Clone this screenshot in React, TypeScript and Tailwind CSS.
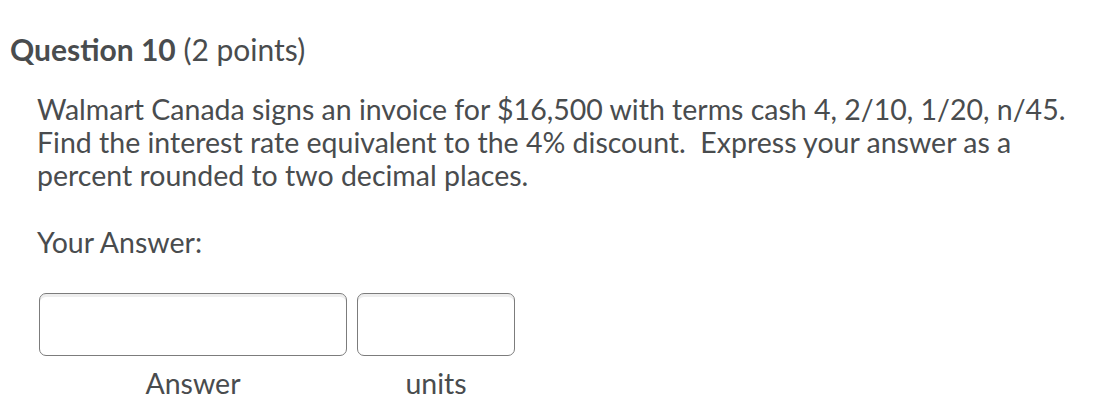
import React from "react";

export default function App() {
    return (
        <div className="w-[1110px] h-[405px] bg-white text-[#494c4e] overflow-hidden" style={{ fontFamily: "Lato, sans-serif" }}>
            {/* Heading */}
            <h2 className="pl-[10px] pt-[32px] text-[30px] leading-[34px]">
                <span className="font-bold">Question 10</span> (2 points)
            </h2>

            <div className="pl-[37px] pt-[27px]">
                <p className="text-[28.5px] leading-[33px] whitespace-nowrap">
                    Walmart Canada signs an invoice for $16,500 with terms cash 4, 2/10, 1/20, n/45.
                    <br />
                    Find the interest rate equivalent to the 4% discount.&nbsp; Express your answer as a
                    <br />
                    percent rounded to two decimal places.
                </p>

                <p className="mt-[34px] text-[28.5px] leading-[33px]">Your Answer:</p>

                {/* Answer fields */}
                <div className="mt-[34px] pl-[2px] flex gap-[10px]">
                    <div className="flex flex-col items-center">
                        <div className="w-[308px] h-[63px] rounded-[7px] border border-[#7c7c7c] shadow-[inset_0_3px_0_#eeeeee]" />
                        <span className="mt-[11px] text-[28.5px] leading-[33px]">Answer</span>
                    </div>
                    <div className="flex flex-col items-center">
                        <div className="w-[158px] h-[63px] rounded-[7px] border border-[#7c7c7c] shadow-[inset_0_3px_0_#eeeeee]" />
                        <span className="mt-[11px] text-[28.5px] leading-[33px]">units</span>
                    </div>
                </div>
            </div>
        </div>
    );
}
